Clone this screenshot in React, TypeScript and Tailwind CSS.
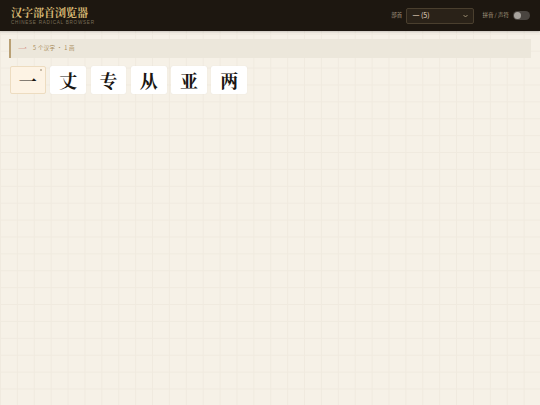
import React from "react";

const chars = ["一", "丈", "专", "从", "亚", "两"];

export default function App() {
  return (
    <div
      className="min-h-screen w-full bg-[#f6f1e7] bg-[linear-gradient(to_right,#f0eadf_1px,transparent_1px),linear-gradient(to_bottom,#f0eadf_1px,transparent_1px)] bg-[size:16.9px_16.9px]"
      style={{ fontFamily: '"Noto Serif CJK SC", "Noto Sans CJK SC", serif' }}
    >
      <header className="h-[31px] bg-[#1d1710] flex items-center justify-between pl-[11px] pr-[10px] shadow-[0_1px_2px_rgba(0,0,0,0.2)]">
        <div className="flex flex-col">
          <div className="text-[11px] leading-[12px] font-bold text-[#d6b874] tracking-[0px]">
            汉字部首浏览器
          </div>
          <div
            className="text-[4.6px] leading-[6px] mt-[2px] tracking-[0.75px] text-[#7b6e58]"
            style={{ fontFamily: '"Liberation Sans", sans-serif' }}
          >
            CHINESE RADICAL BROWSER
          </div>
        </div>
        <div className="flex items-center">
          <span className="text-[5.5px] text-[#a89a80] mr-[4px]" style={{ fontFamily: '"Noto Sans CJK SC", sans-serif' }}>部首</span>
          <div className="w-[68px] h-[16px] rounded-[2px] border border-[#4a3f2e] bg-[#2a2218] flex items-center justify-between pl-[5px] pr-[5px]">
            <span className="text-[7px] text-[#e8dcc4]" style={{ fontFamily: '"Noto Sans CJK SC", sans-serif' }}>一 (5)</span>
            <svg width="5" height="4" viewBox="0 0 10 6" fill="none" stroke="#b8a888" strokeWidth="1.6">
              <path d="M1 1l4 4 4-4" />
            </svg>
          </div>
          <span className="text-[5.5px] text-[#a89a80] ml-[8px] mr-[4px]" style={{ fontFamily: '"Noto Sans CJK SC", sans-serif' }}>拼音 / 声符</span>
          <div className="w-[17px] h-[9px] rounded-full bg-[#4a4540] flex items-center px-[1px]">
            <div className="w-[7px] h-[7px] rounded-full bg-[#a8a49e]" />
          </div>
        </div>
      </header>

      <div className="px-[9px] pt-[8px]">
        <div className="h-[19px] bg-[#ece7db] border-l-2 border-[#b9a074] flex items-center pl-[7px]">
          <span className="text-[9px] text-[#c65a4e] leading-none">一</span>
          <span className="text-[5.5px] text-[#a88a58] ml-[6px] tracking-[0.3px]" style={{ fontFamily: '"Noto Sans CJK SC", sans-serif' }}>
            5 个汉字 · 1 画
          </span>
        </div>

        <div className="flex gap-[4.6px] mt-[8px] pl-[1px]">
          {chars.map((c, i) => (
            <div
              key={c}
              className={
                i === 0
                  ? "relative w-[35.7px] h-[27.5px] rounded-[2px] bg-[#fdf3e4] border border-[#eddcc0] flex items-center justify-center"
                  : "relative w-[35.7px] h-[27.5px] rounded-[2px] bg-white shadow-[0_0_1px_rgba(0,0,0,0.1)] flex items-center justify-center"
              }
            >
              <span className="text-[18px] font-bold text-[#1a1612] leading-none">{c}</span>
              {i === 0 && (
                <div className="absolute top-[2px] right-[3px] w-[2px] h-[2px] bg-[#c8bba8]" />
              )}
            </div>
          ))}
        </div>
      </div>
    </div>
  );
}
